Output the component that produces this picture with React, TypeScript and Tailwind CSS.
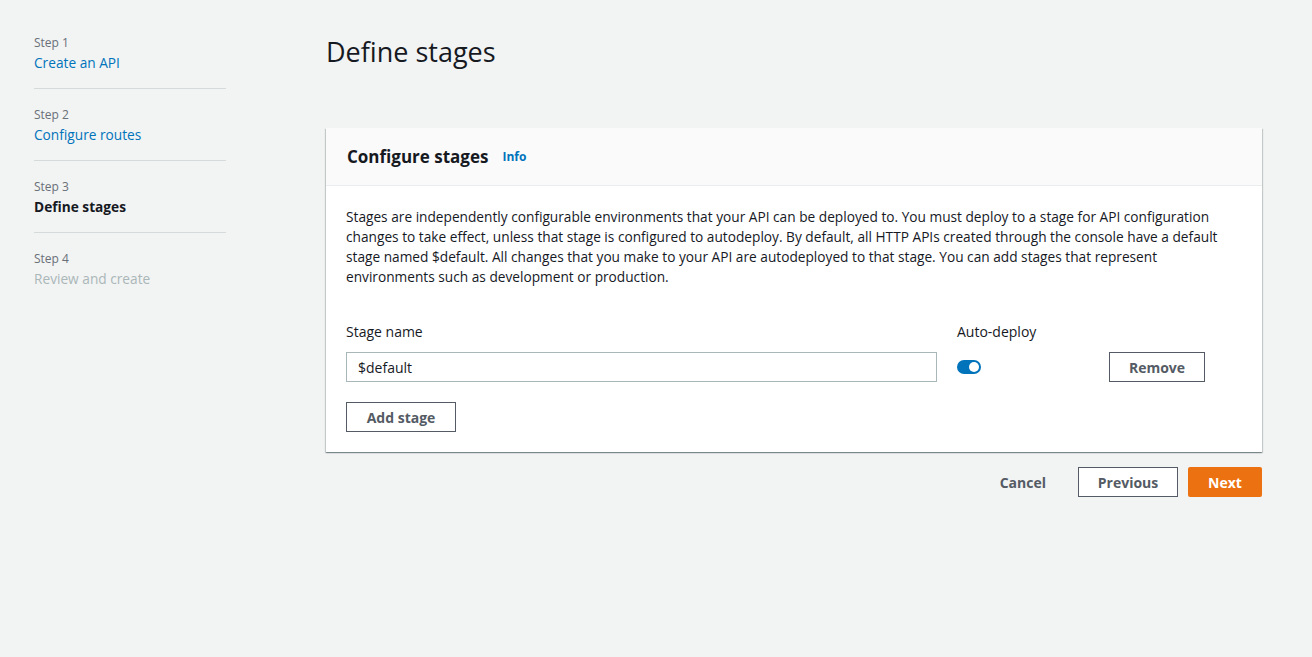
export default function App() {
  const steps = [
    { n: "Step 1", label: "Create an API", state: "done" },
    { n: "Step 2", label: "Configure routes", state: "done" },
    { n: "Step 3", label: "Define stages", state: "current" },
    { n: "Step 4", label: "Review and create", state: "todo" },
  ];

  return (
    <div className="min-h-[657px] bg-[#f2f3f3] font-['Open_Sans',sans-serif] text-[#16191f]">
      <div className="flex">
        {/* wizard steps */}
        <nav className="ml-[34px] mt-[33px] w-[192px] shrink-0">
          {steps.map((s, i) => (
            <div
              key={s.n}
              className={`pb-[15px] ${i > 0 ? "pt-[16px]" : ""} ${i < steps.length - 1 ? "border-b border-[#d5dbdb]" : ""}`}
            >
              <div className="text-[12px] leading-[20px] text-[#687078]">{s.n}</div>
              <div
                className={`text-[13.7px] leading-[20px] ${
                  s.state === "done"
                    ? "text-[#0073bb]"
                    : s.state === "current"
                    ? "font-bold text-[#16191f]"
                    : "text-[#aab7b8]"
                }`}
              >
                {s.label}
              </div>
            </div>
          ))}
        </nav>

        {/* main */}
        <main className="ml-[100px] w-[936px]">
          <h1 className="mt-[34px] text-[27px] leading-[36px] font-normal">Define stages</h1>

          <section className="mt-[58px] bg-white shadow-[0_1px_1px_0_rgba(0,28,36,0.3),1px_1px_1px_0_rgba(0,28,36,0.15),-1px_1px_1px_0_rgba(0,28,36,0.15)]">
            <div className="flex h-[58px] items-center border-b border-[#eaeded] bg-[#fafafa] px-[21px] pt-[1px]">
              <h2 className="text-[17px] font-bold leading-[24px]">Configure stages</h2>
              <span className="ml-[14px] text-[12px] font-bold text-[#0073bb]">Info</span>
            </div>
            <div className="px-[20px] pt-[21px] pb-[20px]">
              <p className="text-[13.7px] leading-[20px] text-[#16191f]">
                Stages are independently configurable environments that your API can be deployed to. You must deploy to a stage for API configuration changes to take effect, unless that stage is configured to autodeploy. By default, all HTTP APIs created through the console have a default stage named $default. All changes that you make to your API are autodeployed to that stage. You can add stages that represent environments such as development or production.
              </p>

              <div className="mt-[35px] flex">
                <div className="w-[611px]">
                  <div className="text-[14px] leading-[20px]">Stage name</div>
                  <div className="mt-[10px] flex h-[30px] w-[591px] items-center border border-[#aab7b8] px-[11px] text-[14px]">
                    $default
                  </div>
                </div>
                <div className="w-[152px]">
                  <div className="text-[14px] leading-[20px]">Auto-deploy</div>
                  <div className="mt-[18px] flex h-[14px] w-[24px] items-center justify-end rounded-full bg-[#0073bb] pr-[2px]">
                    <span className="h-[10px] w-[10px] rounded-full bg-white" />
                  </div>
                </div>
                <div className="pt-[30px]">
                  <button className="h-[30px] w-[96px] border border-[#545b64] bg-white text-[14px] font-bold text-[#545b64]">
                    Remove
                  </button>
                </div>
              </div>

              <button className="mt-[20px] h-[30px] w-[110px] border border-[#545b64] bg-white text-[14px] font-bold text-[#545b64]">
                Add stage
              </button>
            </div>
          </section>

          <div className="mt-[15px] flex items-center justify-end">
            <button className="mr-[32px] text-[14px] font-bold text-[#545b64]">Cancel</button>
            <button className="h-[30px] w-[100px] border border-[#545b64] bg-white text-[14px] font-bold text-[#545b64]">
              Previous
            </button>
            <button className="ml-[10px] h-[30px] w-[74px] rounded-[2px] bg-[#ec7211] text-[14px] font-bold text-white">
              Next
            </button>
          </div>
        </main>
      </div>
    </div>
  );
}
